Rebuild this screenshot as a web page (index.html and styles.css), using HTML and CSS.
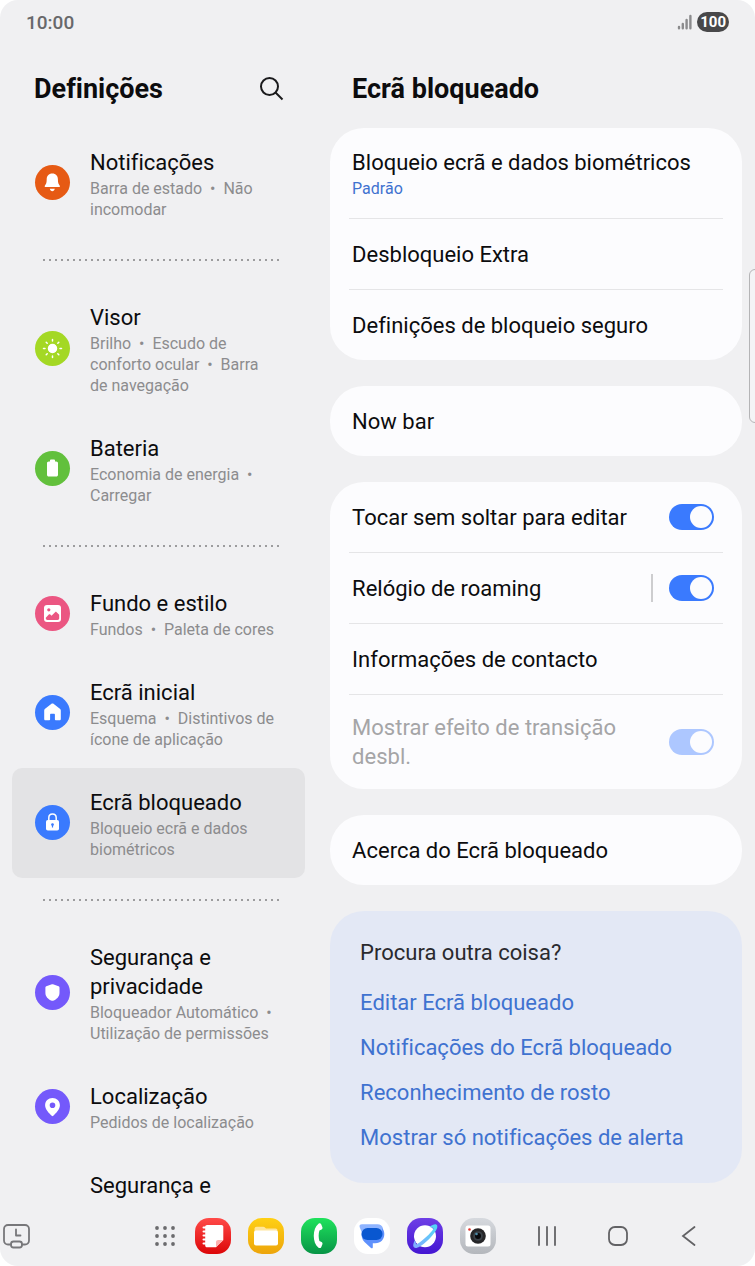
FILE: index.html
```
<!DOCTYPE html>
<html lang="pt">
<head>
    <meta charset="UTF-8">
    <meta name="viewport" content="width=device-width, initial-scale=1.0">
    <title>Ecrã bloqueado</title>
    <link rel="stylesheet" href="styles.css">
</head>
<body>
    <div class="screen">
        <header class="status-bar">
            <span class="time">10:00</span>
            <div class="status-icons">
                <svg class="signal" width="15" height="16" viewBox="0 0 15 16">
                    <path d="M2 13v1.200M5.800 10v4.200M9.600 6v8.200M13.400 2v12.200" fill="none" stroke="#8b8b8d" stroke-width="2.400" stroke-linecap="round"/>
                </svg>
                <span class="battery">100</span>
            </div>
        </header>

        <div class="panes">
            <aside class="sidebar">
                <div class="pane-header">
                    <h1>Definições</h1>
                    <button type="button" class="icon-btn" aria-label="Procurar">
                        <svg width="26" height="26" viewBox="0 0 26 26" fill="none" stroke="#1a1a1c" stroke-width="2">
                            <circle cx="10.500" cy="10.500" r="8.500"/>
                            <path d="M16.500 16.500l7 7"/>
                        </svg>
                    </button>
                </div>

                <nav class="menu">
                    <a href="#" class="item">
                        <span class="badge orange">
                            <svg width="35" height="35" viewBox="0 0 35 35" fill="#fff">
                                <path d="M17.300 8.500c-3.600 0-5.600 2.500-5.600 5.800 0 3.500-.6 4.800-1.700 6.100-.6.800-.3 1.700.7 1.700h13.200c1 0 1.300-.9.700-1.700-1.100-1.300-1.700-2.600-1.700-6.100 0-3.300-2-5.800-5.600-5.800z"/>
                                <path d="M14.800 23.800h5c-.3 1.600-1.300 2.400-2.500 2.400s-2.200-.8-2.500-2.400z"/>
                            </svg>
                        </span>
                        <span class="text">
                            <span class="name">Notificações</span>
                            <span class="desc">Barra de estado&nbsp;&nbsp;•&nbsp; Não incomodar</span>
                        </span>
                    </a>

                    <hr class="dots">

                    <a href="#" class="item">
                        <span class="badge lime">
                            <svg width="35" height="35" viewBox="0 0 35 35" fill="#fff" stroke="#fff" stroke-width="1.500" stroke-linecap="round">
                                <circle cx="17.500" cy="17.500" r="4"/>
                                <path d="M17.500 8.500v1.500M17.500 25v1.500M8.500 17.500H10M25 17.500h1.500M11.200 11.200l1 1M22.800 22.800l1 1M23.800 11.200l-1 1M12.200 22.800l-1 1"/>
                            </svg>
                        </span>
                        <span class="text">
                            <span class="name">Visor</span>
                            <span class="desc">Brilho&nbsp;&nbsp;•&nbsp; Escudo de conforto ocular&nbsp;&nbsp;•&nbsp; Barra de navegação</span>
                        </span>
                    </a>

                    <a href="#" class="item">
                        <span class="badge green">
                            <svg width="35" height="35" viewBox="0 0 35 35" fill="#fff">
                                <path d="M15 9.500c0-.5.400-.9.900-.9h3.200c.5 0 .9.400.9.900v1h1.200c1.100 0 1.800.7 1.800 1.800v11.400c0 1.100-.7 1.800-1.800 1.800h-7.400c-1.100 0-1.800-.7-1.800-1.800V12.300c0-1.100.7-1.800 1.800-1.800H15z"/>
                            </svg>
                        </span>
                        <span class="text">
                            <span class="name">Bateria</span>
                            <span class="desc">Economia de energia&nbsp;&nbsp;•&nbsp; Carregar</span>
                        </span>
                    </a>

                    <hr class="dots">

                    <a href="#" class="item">
                        <span class="badge pink">
                            <svg width="35" height="35" viewBox="0 0 35 35">
                                <rect x="9" y="9" width="17" height="17" rx="3" fill="#fff"/>
                                <circle cx="13.800" cy="13.800" r="1.600" fill="#eb5682"/>
                                <path d="M10.800 21.800l3-3.200c.5-.5 1-.5 1.500 0l1.200 1.200 3.600-3.600c.5-.5 1-.5 1.500 0l2.600 2.600v3.500c0 1-.7 1.700-1.700 1.700h-10c-1 0-1.700-.7-1.700-1.700z" fill="#eb5682"/>
                            </svg>
                        </span>
                        <span class="text">
                            <span class="name">Fundo e estilo</span>
                            <span class="desc">Fundos&nbsp;&nbsp;•&nbsp; Paleta de cores</span>
                        </span>
                    </a>

                    <a href="#" class="item">
                        <span class="badge blue">
                            <svg width="35" height="35" viewBox="0 0 35 35" fill="#fff">
                                <path d="M16.200 9l-6.100 4.800c-.6.500-.9 1.100-.9 1.800v8.300c0 .8.500 1.300 1.300 1.300h3.800c.5 0 .8-.3.800-.8v-4.600c0-.6.400-1 1-1h2.800c.6 0 1 .4 1 1v4.600c0 .5.300.8.800.8h3.800c.8 0 1.300-.5 1.300-1.300v-8.300c0-.7-.3-1.300-.9-1.800L18.800 9c-.8-.6-1.800-.6-2.600 0z"/>
                            </svg>
                        </span>
                        <span class="text">
                            <span class="name">Ecrã inicial</span>
                            <span class="desc">Esquema&nbsp;&nbsp;•&nbsp; Distintivos de ícone de aplicação</span>
                        </span>
                    </a>

                    <a href="#" class="item active" aria-current="page">
                        <span class="badge blue">
                            <svg width="35" height="35" viewBox="0 0 35 35">
                                <path d="M13.800 16v-3.200c0-2.300 1.500-3.800 3.700-3.800s3.700 1.500 3.700 3.800V16" fill="none" stroke="#fff" stroke-width="1.500"/>
                                <rect x="11" y="15" width="13" height="10.500" rx="1.800" fill="#fff"/>
                                <path d="M17.500 18.300a1.300 1.300 0 0 1 .6 2.500v1.800h-1.200v-1.800a1.300 1.300 0 0 1 .6-2.500z" fill="#3a7afe"/>
                            </svg>
                        </span>
                        <span class="text">
                            <span class="name">Ecrã bloqueado</span>
                            <span class="desc">Bloqueio ecrã e dados biométricos</span>
                        </span>
                    </a>

                    <hr class="dots">

                    <a href="#" class="item">
                        <span class="badge purple">
                            <svg width="35" height="35" viewBox="0 0 35 35" fill="#fff">
                                <path d="M16.900 9.200l-5.600 2c-.6.200-.9.600-.9 1.200v5.300c0 3.800 2.700 6.600 6.400 8 .4.200.9.200 1.300 0 3.700-1.400 6.400-4.200 6.400-8v-5.300c0-.6-.3-1-.9-1.200l-5.600-2c-.4-.1-.7-.1-1.100 0z"/>
                            </svg>
                        </span>
                        <span class="text">
                            <span class="name">Segurança e privacidade</span>
                            <span class="desc">Bloqueador Automático&nbsp;&nbsp;•&nbsp; Utilização de permissões</span>
                        </span>
                    </a>

                    <a href="#" class="item">
                        <span class="badge purple">
                            <svg width="35" height="35" viewBox="0 0 35 35" fill="#fff" fill-rule="evenodd">
                                <path d="M17.500 9c-4.200 0-7.400 3-7.400 7.200 0 4.400 3.900 7.700 6.600 10.600.5.500 1.100.5 1.600 0 2.700-2.900 6.600-6.200 6.600-10.600 0-4.200-3.200-7.200-7.400-7.200zm0 4.400a2.800 2.800 0 1 1 0 5.600 2.800 2.800 0 0 1 0-5.600z"/>
                            </svg>
                        </span>
                        <span class="text">
                            <span class="name">Localização</span>
                            <span class="desc">Pedidos de localização</span>
                        </span>
                    </a>

                    <a href="#" class="item">
                        <span class="badge empty"></span>
                        <span class="text">
                            <span class="name">Segurança e</span>
                        </span>
                    </a>
                </nav>
            </aside>

            <main class="content">
                <div class="pane-header">
                    <h2>Ecrã bloqueado</h2>
                </div>

                <section class="card">
                    <a href="#" class="row tall">
                        <span class="text">
                            <span class="name">Bloqueio ecrã e dados biométricos</span>
                            <span class="value">Padrão</span>
                        </span>
                    </a>
                    <a href="#" class="row">Desbloqueio Extra</a>
                    <a href="#" class="row">Definições de bloqueio seguro</a>
                </section>

                <section class="card">
                    <a href="#" class="row">Now bar</a>
                </section>

                <section class="card">
                    <div class="row">
                        <label for="touch">Tocar sem soltar para editar</label>
                        <input type="checkbox" id="touch" class="switch" checked>
                    </div>
                    <div class="row">
                        <label for="roaming">Relógio de roaming</label>
                        <span class="line"></span>
                        <input type="checkbox" id="roaming" class="switch" checked>
                    </div>
                    <a href="#" class="row">Informações de contacto</a>
                    <div class="row disabled">
                        <label for="effect">Mostrar efeito de transição desbl.</label>
                        <input type="checkbox" id="effect" class="switch" checked disabled>
                    </div>
                </section>

                <section class="card">
                    <a href="#" class="row">Acerca do Ecrã bloqueado</a>
                </section>

                <section class="card related">
                    <h3>Procura outra coisa?</h3>
                    <a href="#">Editar Ecrã bloqueado</a>
                    <a href="#">Notificações do Ecrã bloqueado</a>
                    <a href="#">Reconhecimento de rosto</a>
                    <a href="#">Mostrar só notificações de alerta</a>
                </section>
            </main>
        </div>

        <footer class="taskbar">
            <button type="button" class="icon-btn" aria-label="Recentes">
                <svg width="27" height="25" viewBox="0 0 27 25" fill="none" stroke="#77777a" stroke-width="1.800" stroke-linecap="round" stroke-linejoin="round">
                    <path d="M8 20.500H5A4 4 0 0 1 1 16.500V5a4 4 0 0 1 4-4h17a4 4 0 0 1 4 4v11.500a4 4 0 0 1-4 4h-3"/>
                    <rect x="8" y="17.500" width="11" height="6" rx="2.500"/>
                    <path d="M13 5.500v6h4.500"/>
                </svg>
            </button>

            <div class="dock">
                <button type="button" class="icon-btn" aria-label="Aplicações">
                    <svg width="22" height="22" viewBox="0 0 22 22" fill="#6b6b6e">
                        <circle cx="3" cy="3" r="1.900"/><circle cx="11" cy="3" r="1.900"/><circle cx="19" cy="3" r="1.900"/>
                        <circle cx="3" cy="11" r="1.900"/><circle cx="11" cy="11" r="1.900"/><circle cx="19" cy="11" r="1.900"/>
                        <circle cx="3" cy="19" r="1.900"/><circle cx="11" cy="19" r="1.900"/><circle cx="19" cy="19" r="1.900"/>
                    </svg>
                </button>
                <button type="button" class="app notes" aria-label="Notas">
                    <svg width="36" height="36" viewBox="0 0 36 36">
                        <path d="M12 7h14.500c1 0 1.800.8 1.800 1.800V22l-7.300 7.300h-9c-1 0-1.800-.8-1.800-1.800V8.800c0-1 .8-1.800 1.800-1.800z" fill="#fff"/>
                        <path d="M21 29.300v-5c0-1.400.9-2.300 2.300-2.300h5z" fill="#ffb0ae"/>
                        <path d="M8.500 9.500h2M8.500 13.500h2M8.500 17.500h2M8.500 21.500h2M8.500 25.500h2" stroke="#fff" stroke-width="2" stroke-linecap="round"/>
                    </svg>
                </button>
                <button type="button" class="app files" aria-label="Ficheiros">
                    <svg width="36" height="36" viewBox="0 0 36 36">
                        <path d="M6.500 11c0-1.400.8-2.200 2.200-2.200h6.500c.9 0 1.400.3 2 .9l.8.800h9.500c1.300 0 2 .8 2 2.200V20h-23z" fill="#ffe59a"/>
                        <rect x="6" y="12.500" width="24" height="15" rx="2" fill="#fff"/>
                    </svg>
                </button>
                <button type="button" class="app phone" aria-label="Telefone">
                    <svg width="36" height="36" viewBox="0 0 36 36">
                        <path d="M17.500 5.700c1-.6 2.200-.4 2.700.5l1.200 3c.3.900 0 1.800-.8 2.200l-2.200 1.100c-1 3.400-1 7 0 10.400l2.200 1.100c.8.400 1.100 1.300.8 2.200l-1.200 3c-.5.900-1.700 1.100-2.700.5-6.300-4.800-6.300-19.200 0-24z" fill="#fff"/>
                    </svg>
                </button>
                <button type="button" class="app messages" aria-label="Mensagens">
                    <svg width="36" height="36" viewBox="0 0 36 36">
                        <path d="M10 6.300h13.500a6 6 0 0 1 5.500 4v6H8.500L5.800 9.500C5 7.500 6 6.300 8 6.300z" fill="#8fb4ff"/>
                        <path d="M8 14h19l1.500-3.500c1.200 1.500 1.800 3.200 1.800 5.500 0 5.500-3.500 9.300-9 9.300h-2.500v3.900c0 1.200-1 1.500-1.800.7L10.500 24C8 21.500 7 18 8 14z" fill="#5f91fc"/>
                        <rect x="7.500" y="10" width="21" height="12" rx="6" fill="#0957d0"/>
                    </svg>
                </button>
                <button type="button" class="app internet" aria-label="Internet">
                    <svg width="36" height="36" viewBox="0 0 36 36">
                        <defs>
                            <linearGradient id="ring" x1="0" y1="1" x2="1" y2="0">
                                <stop offset="0" stop-color="#86a8ff"/>
                                <stop offset="1" stop-color="#4fdcf5"/>
                            </linearGradient>
                        </defs>
                        <circle cx="18" cy="18.300" r="11" fill="#fff"/>
                        <path d="M22.500 9C26.500 5.800 30.800 5 30.300 9c-.6 5.500-14.700 20-20.800 20.900-4 .5-4-3.400-1.700-7.700.3 1.200.6 1.900 1.200 2.700-.4 1.300.2 1.600 1.600.8C15.500 22.900 24 15 26.300 11c.5-1.100-.8-1.400-3.800-2z" fill="url(#ring)"/>
                    </svg>
                </button>
                <button type="button" class="app camera" aria-label="Câmara">
                    <svg width="36" height="36" viewBox="0 0 36 36">
                        <rect x="5.500" y="7.500" width="25" height="21" rx="2.500" fill="#fff"/>
                        <circle cx="9.500" cy="11.500" r="1.300" fill="#e2332d"/>
                        <circle cx="18" cy="18" r="7.800" fill="#262628"/>
                        <circle cx="18" cy="18" r="4.800" fill="#3b4248"/>
                        <circle cx="18" cy="18" r="3" fill="#08090c"/>
                        <circle cx="16.500" cy="16" r="1.300" fill="#4b8ba8"/>
                    </svg>
                </button>
            </div>

            <div class="nav-keys">
                <button type="button" class="icon-btn" aria-label="Aplicações recentes">
                    <svg width="22" height="22" viewBox="0 0 22 22" fill="none" stroke="#626265" stroke-width="1.800" stroke-linecap="round">
                        <path d="M3 2v18M11 2v18M19 2v18"/>
                    </svg>
                </button>
                <button type="button" class="icon-btn" aria-label="Início">
                    <svg width="22" height="22" viewBox="0 0 22 22" fill="none" stroke="#626265" stroke-width="1.800">
                        <rect x="2" y="2" width="18" height="18" rx="6"/>
                    </svg>
                </button>
                <button type="button" class="icon-btn" aria-label="Retroceder">
                    <svg width="22" height="22" viewBox="0 0 22 22" fill="none" stroke="#626265" stroke-width="1.800" stroke-linecap="round">
                        <path d="M16.500 2L5 11l11.500 9"/>
                    </svg>
                </button>
            </div>
        </footer>

        <span class="edge-handle"></span>
    </div>
</body>
</html>
```
FILE: styles.css
```
* {
    box-sizing: border-box;
}

body {
    margin: 0;
    background-color: white;
    font-family: Roboto, "Liberation Sans", sans-serif;
    font-size: 22px;
    font-variant-ligatures: none;
    line-height: 29px;
    color: #0c0c0e;
}

a {
    color: inherit;
    text-decoration: none;
}

button {
    padding: 0;
    border: none;
    background: none;
    cursor: pointer;
}

svg {
    display: block;
}

.screen {
    position: relative;
    display: flex;
    flex-direction: column;
    height: 100vh;
    background-color: #f0f0f2;
    border-radius: 18px;
    overflow: hidden;
}

/* status bar */
.status-bar {
    display: flex;
    flex-shrink: 0;
    justify-content: space-between;
    align-items: center;
    height: 50px;
    padding: 0 26px 6px;
}

.time {
    font-size: 19px;
    font-weight: 500;
    color: #68686a;
}

.status-icons {
    display: flex;
    align-items: center;
    gap: 5px;
}

.battery {
    padding: 0 3px;
    border-radius: 10px;
    background-color: #48484a;
    color: white;
    font-size: 15px;
    font-weight: 700;
    line-height: 20px;
}

/* two panes */
.panes {
    display: grid;
    grid-template-columns: 42% 58%;
    flex: 1;
    min-height: 0;
}

.sidebar,
.content {
    min-height: 0;
    overflow: hidden;
}

.sidebar {
    padding: 0 12px;
}

.content {
    padding: 0 13px;
}

.pane-header {
    display: flex;
    justify-content: space-between;
    align-items: center;
    height: 78px;
    padding: 0 20px 0 22px;
}

h1,
h2 {
    margin: 0;
    font-size: 27px;
    font-weight: 700;
}

/* left menu */
.item {
    display: flex;
    align-items: center;
    gap: 20px;
    padding: 20px 27px 18px 23px;
    border-radius: 10px;
}

.item.active {
    background-color: #e3e3e5;
}

.badge {
    flex-shrink: 0;
    width: 35px;
    height: 35px;
    margin-bottom: 3px;
    border-radius: 50%;
}

.badge.empty {
    height: 0;
    margin: 0;
}

.orange { background-color: #e65a14; }
.lime { background-color: #a4d824; }
.green { background-color: #62c03c; }
.pink { background-color: #eb5682; }
.blue { background-color: #3a7afe; }
.purple { background-color: #7459fb; }

.name,
.desc,
.value {
    display: block;
}

.desc,
.value {
    margin-top: 1px;
    font-size: 16px;
    line-height: 21px;
}

.desc {
    color: #8c8c8e;
}

.dots {
    height: 2px;
    margin: 21px 26px 22px 29px;
    border: none;
    background: radial-gradient(circle, #9c9c9e 1px, transparent 1px) 0 0 / 6px 2px;
}

/* cards */
.card {
    margin-bottom: 26px;
    padding: 0 19px;
    border-radius: 34px;
    background-color: #fcfcfe;
}

.row {
    display: flex;
    align-items: center;
    min-height: 70px;
    padding: 0 9px 0 3px;
}

.row + .row {
    border-top: 1px solid #e5e5e7;
    min-height: 71px;
}

.row.tall {
    padding-top: 20px;
    padding-bottom: 19px;
}

.row label {
    flex: 1;
    padding-right: 40px;
}

.value {
    color: #3f72d0;
}

.row.disabled {
    padding-top: 18px;
    padding-bottom: 18px;
    color: #a5a5a7;
}

.line {
    width: 2px;
    height: 28px;
    margin-right: 16px;
    background-color: #cdcdcf;
}

.switch {
    appearance: none;
    flex-shrink: 0;
    width: 45px;
    height: 26px;
    margin: 0;
    padding: 2px;
    border-radius: 13px;
    background-color: #3a7afe;
}

.switch::before {
    content: "";
    display: block;
    width: 22px;
    height: 22px;
    border-radius: 50%;
    background-color: #fcfcfe;
}

.switch:checked::before {
    margin-left: auto;
}

.switch:disabled {
    background-color: #adc7ff;
}

.related {
    display: flex;
    flex-direction: column;
    gap: 16px;
    margin-bottom: 0;
    padding: 27px 30px 31px;
    background-color: #e3e8f5;
    color: #3f72d0;
}

.related h3 {
    margin: 0 0 5px;
    font-size: 22px;
    font-weight: 400;
    line-height: 29px;
    color: #2a2a2e;
}

/* bottom bar */
.taskbar {
    display: flex;
    flex-shrink: 0;
    align-items: center;
    height: 60px;
    padding: 0 55px 0 3px;
}

.dock {
    display: flex;
    align-items: center;
    gap: 17px;
    margin-left: auto;
}

.dock .icon-btn {
    margin-right: 2px;
}

.app {
    width: 36px;
    height: 36px;
    border-radius: 14px;
}

.notes { background: linear-gradient(#ff4a48, #dc0608); }
.files { background: linear-gradient(#ffd014, #eda50c); }
.phone { background: linear-gradient(#1fe25c, #079446); }
.messages { background: white; }
.internet { background: linear-gradient(#6e3fe6, #4416d2); }
.camera { background: linear-gradient(#d6d9de, #b4b7bc); }

.nav-keys {
    display: flex;
    gap: 49px;
    margin-left: 40px;
}

.edge-handle {
    position: absolute;
    top: 269px;
    right: -6px;
    width: 12px;
    height: 154px;
    border: 1px solid #b4b4b6;
    border-radius: 6px;
    background-color: #f4f4f6;
}
```
